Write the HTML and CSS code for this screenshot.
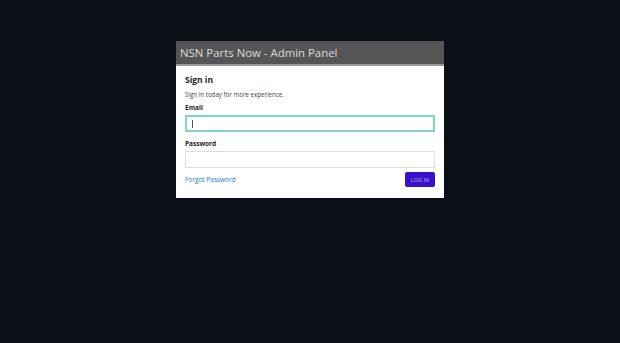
FILE: index.html
```html
<!DOCTYPE html>
<html>
<head>
<meta charset="utf-8">
<link rel="stylesheet" href="styles.css">
</head>
<body>
<div class="panel">
  <div class="panel-head">NSN Parts Now - Admin Panel</div>
  <div class="panel-body">
    <h2 class="title">Sign in</h2>
    <p class="sub">Sign in today for more experience.</p>
    <label class="label">Email</label>
    <div class="input focus"><span class="caret"></span></div>
    <label class="label">Password</label>
    <div class="input"></div>
    <div class="actions">
      <a class="forgot">Forgot Password</a>
      <button class="btn">LOG IN</button>
    </div>
  </div>
</div>
</body>
</html>
```
FILE: styles.css
```css
html, body { margin: 0; padding: 0; }
body {
  background: #0a0f18;
  width: 620px;
  height: 343px;
  font-family: "Open Sans", sans-serif;
  overflow: hidden;
}
.panel {
  width: 268px;
  margin: 41px auto 0;
  background: #fff;
}
.panel-head {
  height: 23px;
  background: #555;
  border-bottom: 2px solid #9a9a9a;
  color: #dcdcdc;
  font-size: 11.4px;
  line-height: 23px;
  padding-left: 4px;
}
.panel-body {
  padding: 7px 9px 11px;
}
.title {
  margin: 0;
  font-size: 8.5px;
  font-weight: 700;
  color: #222;
  line-height: 13px;
}
.sub {
  margin: 4px 0 3px;
  font-size: 6.2px;
  color: #444;
  line-height: 10px;
}
.label {
  display: block;
  margin: 0;
  font-size: 6.5px;
  font-weight: 700;
  color: #222;
  line-height: 10px;
}
.input {
  box-sizing: border-box;
  height: 17px;
  border: 1px solid #ddd;
  margin: 2px 0 7px;
  display: flex;
  align-items: center;
  padding-left: 6px;
}
.input.focus { border: 2px solid #7fd6c2; padding-left: 5px; }
.caret { width: 1px; height: 8px; background: #555; }
.actions {
  display: flex;
  justify-content: space-between;
  align-items: center;
  margin-top: -3px;
}
.forgot { color: #1f78d1; font-size: 6.5px; }
.btn {
  width: 30px;
  height: 15px;
  padding: 0;
  border: none;
  border-radius: 2px;
  background: #3a10cc;
  color: #b8b0ee;
  font-family: "Open Sans", sans-serif;
  font-size: 5.5px;
}
```
